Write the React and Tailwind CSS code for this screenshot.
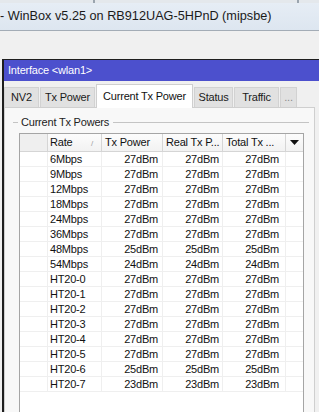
import React from "react";

const rows = [
  ["6Mbps", "27dBm", "27dBm", "27dBm"],
  ["9Mbps", "27dBm", "27dBm", "27dBm"],
  ["12Mbps", "27dBm", "27dBm", "27dBm"],
  ["18Mbps", "27dBm", "27dBm", "27dBm"],
  ["24Mbps", "27dBm", "27dBm", "27dBm"],
  ["36Mbps", "27dBm", "27dBm", "27dBm"],
  ["48Mbps", "25dBm", "25dBm", "25dBm"],
  ["54Mbps", "24dBm", "24dBm", "24dBm"],
  ["HT20-0", "27dBm", "27dBm", "27dBm"],
  ["HT20-1", "27dBm", "27dBm", "27dBm"],
  ["HT20-2", "27dBm", "27dBm", "27dBm"],
  ["HT20-3", "27dBm", "27dBm", "27dBm"],
  ["HT20-4", "27dBm", "27dBm", "27dBm"],
  ["HT20-5", "27dBm", "27dBm", "27dBm"],
  ["HT20-6", "25dBm", "25dBm", "25dBm"],
  ["HT20-7", "23dBm", "23dBm", "23dBm"],
];

const tabs = [
  { label: "NV2", w: "w-[35px]" },
  { label: "Tx Power", w: "w-[55px]" },
  { label: "Current Tx Power", w: "w-[97px]", active: true },
  { label: "Status", w: "w-[39px]" },
  { label: "Traffic", w: "w-[45px]" },
  { label: "...", w: "w-[17px]" },
];

export default function App() {
  return (
    <div
      className="w-[319px] h-[412px] overflow-hidden bg-[#f0f0f0] flex flex-col text-black"
      style={{ fontFamily: "'Liberation Sans', Arial, sans-serif" }}
    >
      {/* top strip */}
      <div className="h-[3px] flex bg-[#e4e8ec]">
        <div className="w-[93px]" />
        <div className="w-[2px] bg-[#9aa4ae]" />
        <div className="w-[202px]" />
        <div className="w-[2px] bg-[#9aa4ae]" />
      </div>
      {/* WinBox title */}
      <div className="h-[28px] flex items-center bg-gradient-to-b from-[#e6edf5] to-[#dde6f0] border-b border-[#a3acb6] text-[12.7px] text-[#1a1a1a] whitespace-nowrap">
        - WinBox v5.25 on RB912UAG-5HPnD (mipsbe)
      </div>
      {/* toolbar area */}
      <div className="h-[28px] bg-[#f0f0f0]" />
      {/* inner window */}
      <div className="flex-1 min-h-0 ml-[2px] border-l-2 border-t border-[#1e1e1e] flex flex-col bg-[#f0f0f0] tracking-[-0.2px]">
        <div className="h-[21px] shrink-0 bg-[#4c50cd] text-white text-[11px] flex items-center pl-[4px] whitespace-nowrap">
          Interface &lt;wlan1&gt;
        </div>
        {/* tabs */}
        <div className="flex items-end h-[26px] shrink-0 text-[11px] whitespace-nowrap">
          {tabs.map((t) =>
            t.active ? (
              <div
                key={t.label}
                className={`${t.w} h-[24px] bg-white border border-b-0 border-[#cfcfcf] flex items-start justify-center pt-[3px] -mb-[1px] mr-[1px] relative z-10 text-[#111]`}
              >
                {t.label}
              </div>
            ) : (
              <div
                key={t.label}
                className={`${t.w} h-[20px] bg-[#e1e1e1] border border-[#d2d2d2] border-b-0 mr-[1px] flex items-center justify-center text-[#1a1a1a]`}
              >
                {t.label === "..." ? (
                  <span className="text-[#8a8a8a]">...</span>
                ) : (
                  t.label
                )}
              </div>
            )
          )}
        </div>
        {/* panel */}
        <div className="flex-1 min-h-0 w-[311px] bg-[#f8f8f8] border border-[#cfcfcf] border-b-0 flex flex-col pt-[7px] overflow-hidden">
          {/* group box label */}
          <div className="flex items-center h-[14px] shrink-0 text-[11px] whitespace-nowrap ml-[8px] mr-[5px]">
            <div className="w-[5px] h-px bg-[#c4c4c4]" />
            <span className="pl-[3px] pr-[4px] text-[#222]">Current Tx Powers</span>
            <div className="flex-1 h-px bg-[#c4c4c4]" />
          </div>
          {/* table */}
          <div className="mt-[4px] ml-[14px] flex-1 bg-white border border-[#a5a5a5] border-b-0 flex flex-col text-[11px] w-[285px] text-[#111]">
            {/* header */}
            <div className="flex h-[18px] shrink-0 bg-gradient-to-b from-[#fcfcfc] to-[#f2f2f2] border-b border-[#d5d5d5] whitespace-nowrap">
              <div className="w-[28px] border-r border-[#d5d5d5] bg-[#efefef]" />
              <div className="w-[54px] border-r border-[#d5d5d5] flex items-center pl-[2px] relative">
                Rate
                <span className="absolute right-[8px] top-[4px] text-[8px] text-[#a0a0a0]">/</span>
              </div>
              <div className="w-[61px] border-r border-[#d5d5d5] flex items-center pl-[3px] overflow-hidden">
                Tx Power
              </div>
              <div className="w-[60px] border-r border-[#d5d5d5] flex items-center pl-[3px] overflow-hidden">
                Real Tx P...
              </div>
              <div className="w-[63px] border-r border-[#d5d5d5] flex items-center pl-[3px] overflow-hidden">
                Total Tx ...
              </div>
              <div className="flex-1 flex items-center justify-center">
                <svg width="9" height="5" viewBox="0 0 9 5">
                  <path d="M0 0 H9 L4.5 5 Z" fill="#111" />
                </svg>
              </div>
            </div>
            {/* body */}
            {rows.map((r) => (
              <div key={r[0]} className="flex h-[15px] shrink-0 border-b border-[#efefef] leading-[14px] whitespace-nowrap">
                <div className="w-[28px] border-r border-[#efefef]" />
                <div className="w-[54px] border-r border-[#efefef] pl-[2px]">{r[0]}</div>
                <div className="w-[61px] border-r border-[#efefef] text-right pr-[4px]">{r[1]}</div>
                <div className="w-[60px] border-r border-[#efefef] text-right pr-[3px]">{r[2]}</div>
                <div className="w-[63px] border-r border-[#efefef] text-right pr-[6px]">{r[3]}</div>
                <div className="flex-1" />
              </div>
            ))}
          </div>
        </div>
      </div>
    </div>
  );
}
